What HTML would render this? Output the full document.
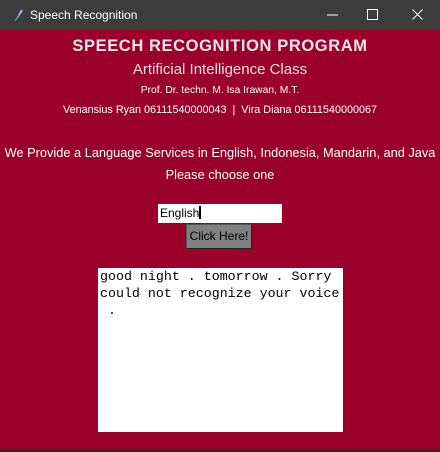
<!DOCTYPE html>
<html><head><meta charset="utf-8"><style>
*{margin:0;padding:0;box-sizing:border-box}
body{width:440px;height:452px;background:#9b002c;position:relative;overflow:hidden;font-family:"Liberation Sans",sans-serif}
.tb{position:absolute;left:0;top:0;width:440px;height:30px;background:#3c3c3c;color:#fff}
.tb .t{position:absolute;left:30px;top:8px;font-size:12px}
.c{position:absolute;left:0;width:440px;text-align:center;color:#fff;white-space:nowrap}
.bot{position:absolute;left:0;top:450px;width:440px;height:2px;background:#2a2a2a}
</style></head><body>
<div class="tb">
<svg style="position:absolute;left:12px;top:8px" width="12" height="14" viewBox="0 0 12 14"><path d="M3 13 L9 2 Q11 1 10 4 L4 12 Z" fill="#cfe0f0" stroke="#6a8ab0" stroke-width="0.8"/></svg>
<span class="t">Speech Recognition</span>
<svg style="position:absolute;left:327px;top:9px" width="12" height="12"><line x1="0" y1="6" x2="11" y2="6" stroke="#fff" stroke-width="1"/></svg>
<svg style="position:absolute;left:367px;top:9px" width="12" height="12"><rect x="0.5" y="0.5" width="10" height="10" fill="none" stroke="#fff" stroke-width="1"/></svg>
<svg style="position:absolute;left:412px;top:9px" width="12" height="12"><path d="M0.5 0.5 L10.5 10.5 M10.5 0.5 L0.5 10.5" stroke="#fff" stroke-width="1"/></svg>
</div>
<div class="c" style="top:37px;font-size:16.5px;font-weight:bold;letter-spacing:0.6px;color:#f4e6ea">SPEECH RECOGNITION PROGRAM</div>
<div class="c" style="top:61px;font-size:15px;color:#f0dde3">Artificial Intelligence Class</div>
<div class="c" style="top:85px;font-size:10.3px">Prof. Dr. techn. M. Isa Irawan, M.T.</div>
<div class="c" style="top:104px;font-size:10.8px">Venansius Ryan 06111540000043 &nbsp;|&nbsp; Vira Diana 06111540000067</div>
<div class="c" style="top:145px;font-size:12.8px">We Provide a Language Services in English, Indonesia, Mandarin, and Java</div>
<div class="c" style="top:167px;font-size:12.8px">Please choose one</div>
<div style="position:absolute;left:158px;top:204px;width:124px;height:19px;background:#fff;font-size:12px;padding:2px 0 0 2px;color:#000">English<span style="display:inline-block;width:2px;height:13px;background:#000;vertical-align:-2px"></span></div>
<div style="position:absolute;left:186px;top:224px;width:66px;height:25px;background:#808080;border:1px solid #555;border-right-color:#222;border-bottom-color:#222;font-size:12px;text-align:center;line-height:22px;color:#000">Click Here!</div>
<div style="position:absolute;left:98px;top:268px;width:245px;height:164px;background:#fff;font-family:'Liberation Mono',monospace;font-size:13.3px;line-height:17px;padding:0 0 0 2px;color:#000;white-space:pre;overflow:hidden">good night . tomorrow . Sorry
could not recognize your voice
 .</div>
<div class="bot"></div>
</body></html>
